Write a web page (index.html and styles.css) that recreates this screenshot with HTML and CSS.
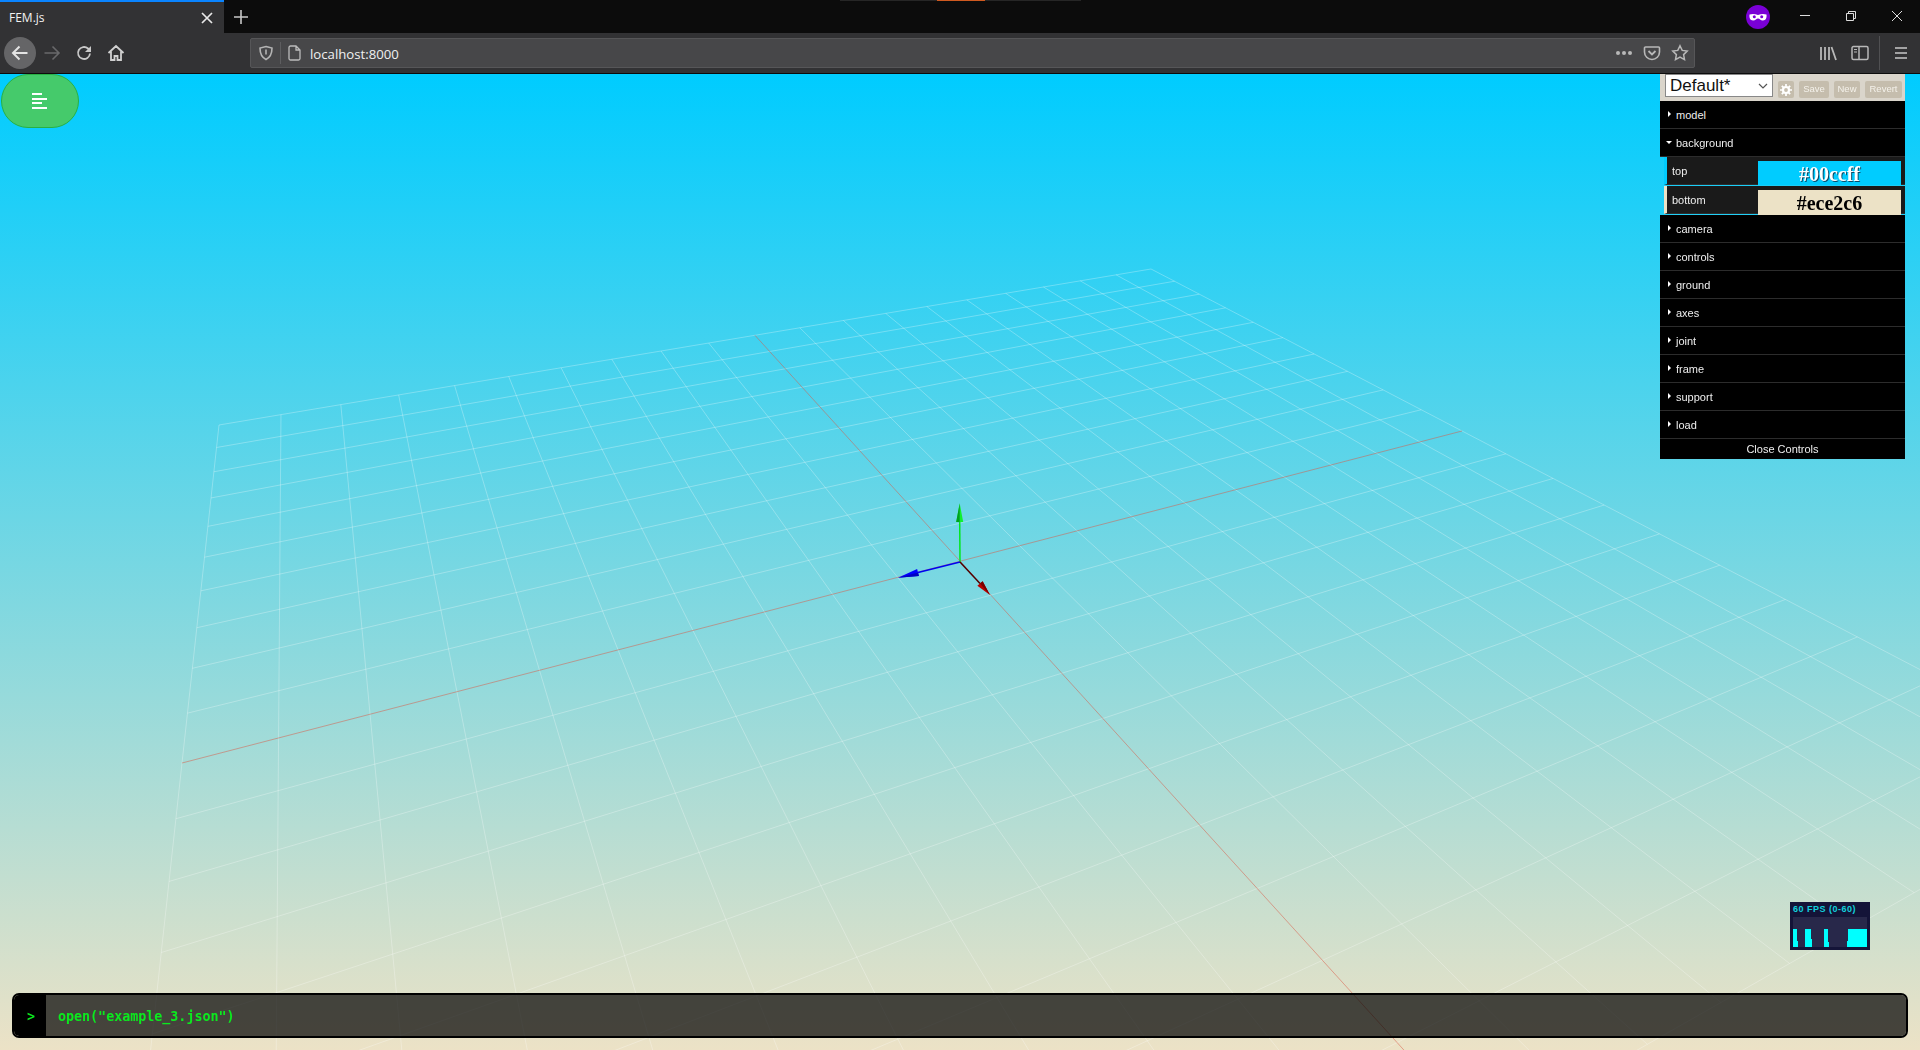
FILE: index.html
```html
<!DOCTYPE html>
<html lang="en">
<head>
    <meta charset="UTF-8">
    <title>FEM.js</title>
    <link rel="stylesheet" href="styles.css">
</head>
<body>
    <div class="tabbar">
        <div class="tab">
            <span class="tab-title">FEM.js</span>
            <svg class="tab-close" width="16" height="16" viewBox="0 0 16 16"><path d="M3 3l10 10M13 3L3 13" stroke="#e8e8e8" stroke-width="1.7"/></svg>
        </div>
        <svg class="new-tab" width="16" height="16" viewBox="0 0 16 16"><path d="M8 1v14M1 8h14" stroke="#c8c8c8" stroke-width="1.6"/></svg>
        <div class="tab-strip"><span class="tab-glow"></span></div>
        <svg class="private" width="24" height="24" viewBox="0 0 24 24"><circle cx="12" cy="12" r="12" fill="#7a00d6"/><path d="M3.5 9.5c3-1 5.5-.6 8.5.4 3-1 5.5-1.4 8.5-.4.4 3-.6 6-3.6 6-2.5 0-3.3-2-4.9-2s-2.4 2-4.9 2c-3 0-4-3-3.6-6z" fill="#fff"/><circle cx="8.3" cy="11.8" r="1.5" fill="#7a00d6"/><circle cx="15.7" cy="11.8" r="1.5" fill="#7a00d6"/></svg>
        <div class="win-buttons">
            <svg width="46" height="33" viewBox="0 0 46 33"><path d="M18 15.5h10" stroke="#ddd"/></svg>
            <svg width="46" height="33" viewBox="0 0 46 33"><path d="M18.5 13.5h7v7h-7zM20.5 13.5v-2h7v7h-2" fill="none" stroke="#ddd"/></svg>
            <svg width="46" height="33" viewBox="0 0 46 33"><path d="M18 11l10 10M28 11L18 21" stroke="#ddd"/></svg>
        </div>
    </div>

    <div class="toolbar">
        <div class="nav-btn nav-back">
            <svg width="18" height="18" viewBox="0 0 18 18"><path d="M16.5 9H2M8.5 2.5L2 9l6.5 6.5" fill="none" stroke="#e4e4e4" stroke-width="2"/></svg>
        </div>
        <div class="nav-btn">
            <svg width="18" height="18" viewBox="0 0 18 18"><path d="M1.5 9H16M9.5 2.5L16 9l-6.5 6.5" fill="none" stroke="#69696b" stroke-width="1.6"/></svg>
        </div>
        <div class="nav-btn">
            <svg width="18" height="18" viewBox="0 0 18 18"><path d="M15 9.5A6 6 0 1 1 13 4.5L15.5 7" fill="none" stroke="#c8c8c8" stroke-width="1.8"/><path d="M16 2v6h-6z" fill="#c8c8c8"/></svg>
        </div>
        <div class="nav-btn">
            <svg width="18" height="18" viewBox="0 0 18 18"><path d="M1.5 9L9 2l7.5 7M4 7.5V16h3.5v-4h3v4H14V7.5" fill="none" stroke="#d0d0d0" stroke-width="1.8"/></svg>
        </div>

        <div class="urlbar">
            <svg class="url-shield" width="16" height="16" viewBox="0 0 16 16"><path d="M8 1.5l6 1.5c0 5-1 9-6 11.5C3 12 2 8 2 3z" fill="none" stroke="#b4b4b4" stroke-width="1.6"/><path d="M7.2 4.5h1.6v5H7.2z" fill="#b4b4b4"/></svg>
            <span class="url-sep"></span>
            <svg class="url-page" width="16" height="16" viewBox="0 0 16 16"><path d="M3.5 1h5.5l4 4v8.5a1.5 1.5 0 0 1-1.5 1.5h-8A1.5 1.5 0 0 1 2 13.5v-11A1.5 1.5 0 0 1 3.5 1zM9 1v4h4" fill="none" stroke="#bcbcbc" stroke-width="1.3"/></svg>
            <span class="url-text">localhost:8000</span>
            <span class="url-dots"><i></i><i></i><i></i></span>
            <svg class="url-icon" width="18" height="18" viewBox="0 0 18 18"><path d="M2.5 3h13a1 1 0 0 1 1 1v4a7.5 7.5 0 0 1-15 0V4a1 1 0 0 1 1-1z" fill="none" stroke="#b8b8b8" stroke-width="1.6"/><path d="M5.5 7L9 10.5 12.5 7" fill="none" stroke="#b8b8b8" stroke-width="1.8"/></svg>
            <svg class="url-icon" width="18" height="18" viewBox="0 0 18 18"><path d="M9 1.8l2.2 4.6 5 .7-3.6 3.5.9 5L9 13.2l-4.5 2.4.9-5L1.8 7.1l5-.7z" fill="none" stroke="#b8b8b8" stroke-width="1.5"/></svg>
        </div>

        <div class="toolbar-right">
            <svg class="tool-library" width="18" height="16" viewBox="0 0 18 16"><path d="M2 2v13M6 2v13M10 2v13M12.5 2l4.5 13" fill="none" stroke="#b8b8b8" stroke-width="1.8"/></svg>
            <svg class="tool-sidebar" width="18" height="16" viewBox="0 0 18 16"><path d="M2.5 1.5h13a1.5 1.5 0 0 1 1.5 1.5v10a1.5 1.5 0 0 1-1.5 1.5h-13A1.5 1.5 0 0 1 1 13V3a1.5 1.5 0 0 1 1.5-1.5zM8 1.5v13" fill="none" stroke="#b8b8b8" stroke-width="1.5"/><path d="M3 4.5h3M3 7h3" stroke="#b8b8b8" stroke-width="1.2"/></svg>
            <span class="toolbar-sep"></span>
            <svg class="tool-menu" width="14" height="14" viewBox="0 0 14 14"><path d="M1 2h12M1 7h12M1 12h12" stroke="#c8c8c8" stroke-width="1.7"/></svg>
        </div>
    </div>

    <div class="viewport">
        <canvas id="scene" width="1920" height="976"></canvas>

        <button class="menu-btn">
            <span class="menu-line line-short"></span>
            <span class="menu-line line-long"></span>
            <span class="menu-line line-short"></span>
            <span class="menu-line line-long"></span>
        </button>

        <div class="gui">
            <div class="gui-save">
                <div class="preset">
                    <span>Default*</span>
                    <svg width="10" height="6" viewBox="0 0 10 6"><path d="M1 1l4 4 4-4" fill="none" stroke="#555" stroke-width="1.2"/></svg>
                </div>
                <div class="save-btn gear">
                    <svg width="12" height="12" viewBox="0 0 12 12"><circle cx="6" cy="6" r="3" fill="none" stroke="#fff" stroke-width="2.2"/><path d="M6 0v2.5M6 9.5V12M0 6h2.5M9.5 6H12M1.8 1.8l1.8 1.8M8.4 8.4l1.8 1.8M10.2 1.8L8.4 3.6M3.6 8.4l-1.8 1.8" stroke="#fff" stroke-width="1.7"/></svg>
                </div>
                <div class="save-btn btn-save">Save</div>
                <div class="save-btn btn-new">New</div>
                <div class="save-btn btn-revert">Revert</div>
            </div>
            <div class="folder"><i class="arrow"></i>model</div>
            <div class="folder"><i class="arrow open"></i>background</div>
            <div class="color-row row-top">
                <span class="color-label">top</span>
                <span class="swatch swatch-top">#00ccff</span>
            </div>
            <div class="color-row row-bottom">
                <span class="color-label">bottom</span>
                <span class="swatch swatch-bottom">#ece2c6</span>
            </div>
            <div class="folder"><i class="arrow"></i>camera</div>
            <div class="folder"><i class="arrow"></i>controls</div>
            <div class="folder"><i class="arrow"></i>ground</div>
            <div class="folder"><i class="arrow"></i>axes</div>
            <div class="folder"><i class="arrow"></i>joint</div>
            <div class="folder"><i class="arrow"></i>frame</div>
            <div class="folder"><i class="arrow"></i>support</div>
            <div class="folder"><i class="arrow"></i>load</div>
            <div class="close-controls">Close Controls</div>
        </div>

        <div class="stats">
            <div class="stats-label">60 FPS (0-60)</div>
            <div class="stats-graph">
                <i class="bar" style="left:0;width:4px;top:12px"></i>
                <i class="bar" style="left:4px;width:1px;top:24px"></i>
                <i class="bar" style="left:12px;width:6px;top:12px"></i>
                <i class="bar" style="left:18px;width:1px;top:22px"></i>
                <i class="bar" style="left:31px;width:4px;top:12px"></i>
                <i class="bar" style="left:35px;width:1px;top:25px"></i>
                <i class="bar" style="left:55px;width:19px;top:12px"></i>
                <i class="bar" style="left:54px;width:1px;top:24px"></i>
            </div>
        </div>

        <div class="console">
            <span class="prompt">&gt;</span>
            <span class="console-input">open("example_3.json")</span>
        </div>
    </div>

    <script src="scene.js"></script>
</body>
</html>
```

FILE: styles.css
```css
html, body {
    margin: 0;
    padding: 0;
    height: 100%;
    overflow: hidden;
}
body {
    font-family: "Open Sans", "Noto Sans", sans-serif;
    background-color: #323234;
    color: #fff;
    display: flex;
    flex-direction: column;
}

/* browser chrome */
.tabbar {
    position: relative;
    height: 33px;
    background-color: #0c0c0c;
    display: flex;
    align-items: center;
    justify-content: flex-end;
    flex-shrink: 0;
}
.tab {
    width: 224px;
    height: 33px;
    box-sizing: border-box;
    background-color: #323234;
    border-top: 2px solid #0a84ff;
    display: flex;
    align-items: center;
    justify-content: space-between;
    padding: 0 9px 0 9px;
}
.tab-title {
    font-size: 12px;
    color: #f2f2f2;
}
.new-tab {
    margin-left: 9px;
    margin-right: auto;
}
.tab-strip {
    position: absolute;
    left: 840px;
    top: 0;
    width: 241px;
    height: 1px;
    background-color: #262626;
    display: flex;
    justify-content: center;
}
.tab-glow {
    width: 48px;
    height: 1px;
    background-color: #d05a20;
}
.private {
    margin-right: 12px;
    margin-top: 1px;
}
.win-buttons {
    display: flex;
}
.toolbar {
    height: 40px;
    background-color: #323234;
    border-bottom: 1px solid #0c0c0c;
    display: flex;
    align-items: center;
    padding: 0 0 0 4px;
    flex-shrink: 0;
}
.nav-btn {
    width: 32px;
    height: 32px;
    display: flex;
    align-items: center;
    justify-content: center;
}
.nav-back {
    background-color: #656567;
    border-radius: 50%;
}
.urlbar {
    width: 1445px;
    height: 30px;
    box-sizing: border-box;
    margin-left: 118px;
    background-color: #474749;
    border: 1px solid #565658;
    border-radius: 2px;
    display: flex;
    align-items: center;
    padding: 0 5px 0 7px;
}
.url-sep {
    width: 1px;
    height: 22px;
    background-color: #5e5e60;
    margin: 0 6px;
}
.url-text {
    font-size: 13.2px;
    color: #f0f0f0;
    margin-left: 7px;
    padding-top: 1px;
    flex: 1;
}
.url-dots {
    display: flex;
    gap: 2px;
    margin-right: 11px;
}
.url-dots i {
    width: 4px;
    height: 4px;
    border-radius: 50%;
    background-color: #b8b8b8;
}
.url-icon + .url-icon {
    margin-left: 10px;
}
.toolbar-right {
    display: flex;
    align-items: center;
    margin-left: 124px;
}
.tool-sidebar {
    margin-left: 14px;
}
.toolbar-sep {
    width: 1px;
    height: 34px;
    background-color: #505052;
    margin: 0 14px 0 10px;
}

/* 3d view */
.viewport {
    position: relative;
    flex: 1;
    background: linear-gradient(#00ccff, #ece2c6);
    overflow: hidden;
}
#scene {
    position: absolute;
    left: 0;
    top: 0;
}
.menu-btn {
    position: absolute;
    left: 1px;
    top: 0;
    width: 78px;
    height: 54px;
    box-sizing: border-box;
    padding: 0 0 0 30px;
    background-color: #45ca6b;
    border: 1px solid #28b044;
    border-radius: 27px;
    display: flex;
    flex-direction: column;
    align-items: flex-start;
    justify-content: center;
    gap: 2.4px;
}
.menu-line {
    display: block;
    height: 2px;
    background-color: #fff;
}
.line-short { width: 10px; }
.line-long { width: 15px; }

/* controls panel */
.gui {
    position: absolute;
    left: 1660px;
    top: 0;
    width: 245px;
    font-family: "Liberation Sans", Arial, sans-serif;
    font-size: 11px;
    color: #eee;
}
.gui-save {
    height: 27px;
    background-color: #dad5cb;
    display: flex;
    align-items: center;
    padding-left: 5px;
}
.preset {
    width: 108px;
    height: 23px;
    box-sizing: border-box;
    margin-top: -4px;
    background-color: #fff;
    border: 1px solid #888;
    color: #111;
    font-size: 17px;
    display: flex;
    align-items: center;
    justify-content: space-between;
    padding: 0 4px;
}
.save-btn {
    height: 17px;
    box-sizing: border-box;
    line-height: 16px;
    margin: 4px 0 0 5px;
    text-align: center;
    background-color: #c5bdad;
    color: #f4f1ea;
    font-size: 9.5px;
    border-radius: 2px;
}
.gear {
    width: 16px;
    display: flex;
    align-items: center;
    justify-content: center;
}
.btn-save { width: 30px; }
.btn-new { width: 26px; }
.btn-revert { width: 37px; }
.folder {
    height: 28px;
    box-sizing: border-box;
    background-color: #000;
    border-bottom: 1px solid #2c2c2c;
    line-height: 29px;
    padding-left: 16px;
    position: relative;
}
.arrow {
    position: absolute;
    left: 8px;
    top: 10px;
    width: 0;
    height: 0;
    border-left: 3px solid #fff;
    border-top: 3px solid transparent;
    border-bottom: 3px solid transparent;
}
.arrow.open {
    left: 6px;
    top: 12px;
    border-top: 3px solid #fff;
    border-left: 3px solid transparent;
    border-right: 3px solid transparent;
    border-bottom: 0;
}
.color-row {
    height: 28px;
    margin-left: 4px;
    margin-bottom: 1px;
    box-sizing: border-box;
    background-color: #1a1a1a;
    display: flex;
    justify-content: flex-end;
    padding-right: 4px;
    position: relative;
    border-bottom: 1px solid #2c2c2c;
}
.row-top {
    border-left: 3px solid #00ccff;
}
.row-bottom {
    border-left: 3px solid #ece2c6;
}
.color-label {
    position: absolute;
    left: 5px;
    top: 8px;
}
.swatch {
    width: 143px;
    height: 24px;
    margin-top: 4px;
    font-family: "Liberation Serif", serif;
    font-size: 20px;
    font-weight: bold;
    line-height: 26px;
    text-align: center;
}
.swatch-top {
    background-color: #00ccff;
    color: #fff;
    text-shadow: 1px 1px 0 #0a4a66;
}
.swatch-bottom {
    height: 25px;
    background-color: #ece2c6;
    color: #000;
}
.close-controls {
    height: 20px;
    line-height: 20px;
    background-color: #000;
    text-align: center;
}

/* fps meter */
.stats {
    position: absolute;
    left: 1790px;
    top: 828px;
    width: 80px;
    height: 48px;
    background-color: #141438;
}
.stats-label {
    font-family: "Liberation Sans", Arial, sans-serif;
    font-size: 9px;
    font-weight: bold;
    letter-spacing: 0.5px;
    line-height: 15px;
    padding-left: 3px;
    color: #12d0dc;
}
.stats-graph {
    position: relative;
    margin: 0 0 0 3px;
    width: 74px;
    height: 30px;
    background-color: #28284a;
}
.bar {
    position: absolute;
    bottom: 0;
    background-color: #0ff;
}

/* command line */
.console {
    position: absolute;
    left: 12px;
    top: 919px;
    width: 1896px;
    height: 45px;
    box-sizing: border-box;
    border: 2px solid #000;
    border-radius: 7px;
    display: flex;
    overflow: hidden;
    font-family: "DejaVu Sans Mono", monospace;
    font-size: 13.33px;
    font-weight: bold;
    color: #0bea1e;
}
.prompt {
    width: 32px;
    background-color: #000;
    line-height: 43px;
    padding-left: 2px;
    text-align: center;
    box-sizing: border-box;
}
.console-input {
    flex: 1;
    background-color: rgba(0, 0, 0, 0.7);
    line-height: 43px;
    padding-left: 12px;
}
```

FILE: scene.js
```js
// ground grid is a 20x20 plane under a fixed perspective camera.
// u runs 0..1 across it, v runs 0..2 from the far edge, so v=1 is the centre line.
const OFFSET_Y = 74;
const H = { a: 1338.66, b: -102.1, c: 219, d: -60.96, e: 65.06, f: 425, g: 0.35331, h: -0.35772 };

function project(u, v) {
    const w = H.g * u + H.h * v + 1;
    return [(H.a * u + H.b * v + H.c) / w, (H.d * u + H.e * v + H.f) / w - OFFSET_Y];
}

const canvas = document.getElementById("scene");
const ctx = canvas.getContext("2d");

function line(from, to, color, width) {
    ctx.strokeStyle = color;
    ctx.lineWidth = width;
    ctx.beginPath();
    ctx.moveTo(from[0], from[1]);
    ctx.lineTo(to[0], to[1]);
    ctx.stroke();
}

const NEAR = 2;
const GRID = "rgba(255, 255, 255, 0.28)";
const AXIS = "rgba(220, 90, 70, 0.5)";

for (let i = 0; i <= 20; i++) {
    if (i === 10) continue;
    line(project(i / 20, 0), project(i / 20, NEAR), GRID, 1);
    line(project(0, i / 10), project(1, i / 10), GRID, 1);
}

// axis lines through the middle
line(project(0, 1), project(1, 1), AXIS, 1);
line(project(0.5, 0), project(0.5, NEAR), AXIS, 1);

function arrow(tip, base, lineColor, light, dark) {
    const ox = 960;
    const oy = 562 - OFFSET_Y;
    const tx = tip[0];
    const ty = tip[1] - OFFSET_Y;
    const bx = base[0];
    const by = base[1] - OFFSET_Y;
    line([ox, oy], [bx, by], lineColor, 1.5);

    const len = Math.hypot(tx - bx, ty - by);
    const nx = -(ty - by) / len * 3.5;
    const ny = (tx - bx) / len * 3.5;
    ctx.fillStyle = light;
    ctx.beginPath();
    ctx.moveTo(tx, ty);
    ctx.lineTo(bx + nx, by + ny);
    ctx.lineTo(bx - nx, by - ny);
    ctx.closePath();
    ctx.fill();
    ctx.fillStyle = dark;
    ctx.beginPath();
    ctx.moveTo(tx, ty);
    ctx.lineTo(bx, by);
    ctx.lineTo(bx - nx, by - ny);
    ctx.closePath();
    ctx.fill();
}

arrow([959.7, 503.3], [959.7, 522], "#00e81c", "#10f030", "#00a020");
arrow([898, 577.7], [918, 572.5], "#0000f0", "#0000ff", "#0000c0");
arrow([990, 595], [980, 583.5], "#500000", "#b80000", "#780000");
```
